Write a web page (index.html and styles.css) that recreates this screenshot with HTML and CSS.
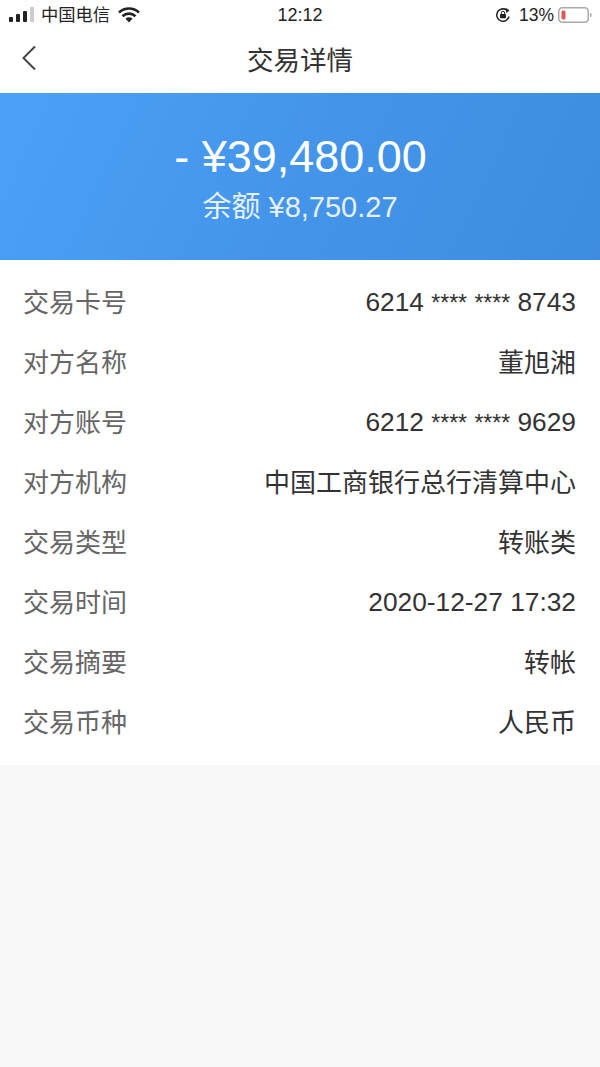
FILE: index.html
```html
<!DOCTYPE html>
<html lang="zh-CN">
<head>
<meta charset="utf-8">
<title>交易详情</title>
<link rel="stylesheet" href="styles.css">
</head>
<body>
<div class="page">
  <div class="status">
    <div class="status-left">
      <svg class="signal" width="25" height="20" viewBox="0 0 25 20"><rect x="0" y="12" width="4" height="5" rx="1" fill="#222"/><rect x="7" y="9" width="4" height="8" rx="1" fill="#222"/><rect x="14" y="6" width="4" height="11" rx="1" fill="#222"/><rect x="21" y="2" width="4" height="15" rx="1" fill="#ccc"/></svg>
      <span class="carrier">中国电信</span>
      <svg class="wifi" width="22" height="16" viewBox="0 0 22 16"><path d="M1 5.500a14.500 14.500 0 0 1 20 0M4.500 9.200a9.500 9.500 0 0 1 13 0" fill="none" stroke="#222" stroke-width="2.600"/><path d="M7.500 11.800a5 5 0 0 1 7 0L11 15.500z" fill="#222"/></svg>
    </div>
    <span class="clock">12:12</span>
    <div class="status-right">
      <svg class="lock" width="16" height="16" viewBox="0 0 16 16"><path d="M14 9.500A6.200 6.200 0 1 1 11.500 3" fill="none" stroke="#222" stroke-width="1.500"/><path d="M10.500 .8l4 2.400-3 3z" fill="#222"/><path d="M6.300 7V6a1.700 1.700 0 0 1 3.400 0v1" fill="none" stroke="#222"/><rect x="5" y="7" width="6" height="4.300" rx=".8" fill="#222"/></svg>
      <span class="pct">13%</span>
      <svg class="battery" width="34" height="18" viewBox="0 0 34 18"><rect x=".75" y="1.750" width="29.500" height="14.500" rx="3.500" fill="#fff" stroke="#aaa" stroke-width="1.500"/><rect x="3.500" y="4.500" width="4" height="9" rx="1.500" fill="#e25555"/><rect x="32" y="7" width="1.500" height="4" rx=".7" fill="#aaa"/></svg>
    </div>
  </div>
  <header class="nav">
    <svg class="back" width="16" height="26" viewBox="0 0 16 26"><path d="M14 1.500L2.500 13 14 24.500" fill="none" stroke="#444" stroke-width="2"/></svg>
    <h1 class="title">交易详情</h1>
  </header>
  <section class="hero">
    <div class="amount">- ¥39,480.00</div>
    <div class="balance">余额 ¥8,750.27</div>
  </section>
  <section class="details">
    <div class="row"><span class="label">交易卡号</span><span class="num">6214 <span class="stars">****</span> <span class="stars">****</span> 8743</span></div>
    <div class="row"><span class="label">对方名称</span><span class="value">董旭湘</span></div>
    <div class="row"><span class="label">对方账号</span><span class="num">6212 <span class="stars">****</span> <span class="stars">****</span> 9629</span></div>
    <div class="row"><span class="label">对方机构</span><span class="value">中国工商银行总行清算中心</span></div>
    <div class="row"><span class="label">交易类型</span><span class="value">转账类</span></div>
    <div class="row"><span class="label">交易时间</span><span class="num">2020-12-27 17:32</span></div>
    <div class="row"><span class="label">交易摘要</span><span class="value">转帐</span></div>
    <div class="row"><span class="label">交易币种</span><span class="value">人民币</span></div>
  </section>
</div>
</body>
</html>
```
FILE: styles.css
```css
* { box-sizing: border-box; margin: 0; padding: 0; }
html, body { width: 600px; height: 1067px; overflow: hidden; }
body { background: #f8f8f8; font-family: "Liberation Sans", "Noto Sans CJK SC", sans-serif; color: #333; }
.page { display: flex; flex-direction: column; height: 1067px; }
.status { position: relative; height: 30px; background: #fff; display: flex; justify-content: space-between; align-items: center; padding: 0 8px 0 9px; color: #222; font-size: 17px; }
.status-left, .status-right { display: flex; align-items: center; }
.carrier { margin-left: 7px; margin-bottom: 4px; font-size: 17.300px; }
.wifi { margin-left: 8px; margin-bottom: 1px; }
.clock { position: absolute; left: 0; right: 0; text-align: center; font-size: 18px; }
.lock { margin-right: 8px; }
.pct { margin-right: 4px; font-size: 17.500px; }
.nav { position: relative; height: 63px; background: #fff; display: flex; align-items: center; justify-content: center; padding-bottom: 7px; }
.back { position: absolute; left: 21px; top: 15px; }
.title { font-size: 26.500px; font-weight: 400; color: #333; }
.hero { height: 167px; background: linear-gradient(115deg, #4ba1f8 0%, #4495ea 50%, #3d8ce0 100%); color: #fff; display: flex; flex-direction: column; align-items: center; padding-top: 37px; }
.amount { font-size: 45px; line-height: 54px; margin-left: 1px; }
.balance { font-size: 29px; line-height: 32px; margin-top: 7px; color: #e6f1fd; }
.details { background: #fff; height: 505px; padding: 13px 24px 0 23px; display: flex; flex-direction: column; }
.row { height: 60.140px; flex: none; display: flex; justify-content: space-between; align-items: center; font-size: 26px; }
.label { color: #666; margin-bottom: 6px; }
.value { color: #333; margin-bottom: 6px; }
.num { color: #333; font-size: 26.300px; margin-bottom: 2px; }
.stars { font-size: 23px; }
```
